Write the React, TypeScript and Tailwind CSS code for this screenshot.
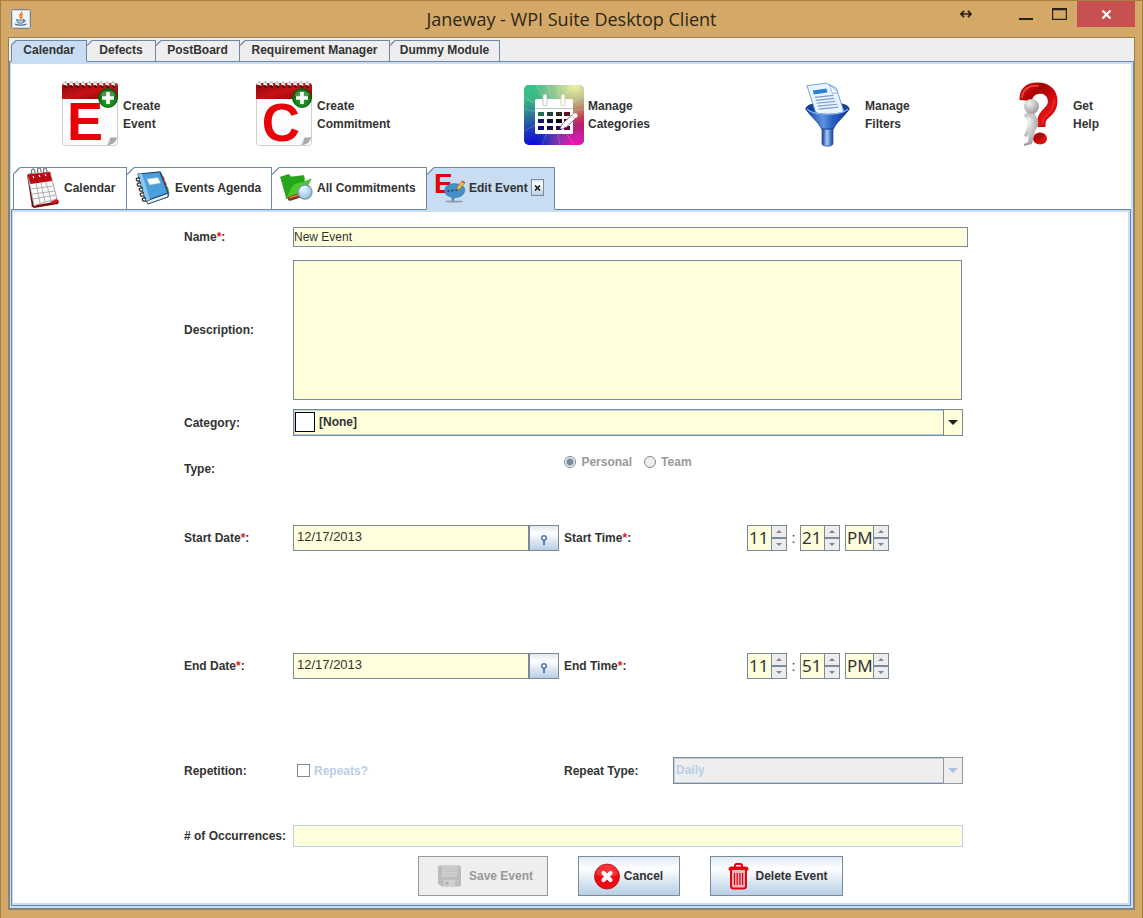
import React, { useState } from 'react';

/* ---------- Icons ---------- */

function JavaIcon() {
  return (
    <svg width="20" height="20" viewBox="0 0 20 20" aria-hidden="true">
      <rect x="0.5" y="0.5" width="19" height="19" rx="2" fill="#f3f5f7" stroke="#76828f" />
      <rect x="1.5" y="1.5" width="17" height="17" rx="1" fill="none" stroke="#cfd6dd" />
      <path d="M10.5 2.5c1.5 1.8-3 2.8-1.600 5.200.5.900 1.200 1.200.8 2.100M12 5c-1.600 1-2.200 1.700-1.300 2.900.5.700.2 1.300-.3 1.700" fill="none" stroke="#e8731c" strokeWidth="1.200" />
      <path d="M5.500 10.500c2 .8 5.500.8 7.500 0l-.8 3.200c-1.500.7-4.200.7-5.700 0zM13 11c2-.3 1.800 2-.5 2" fill="#b9c9da" stroke="#4b6f95" strokeWidth="0.900" />
      <path d="M4 15c2.500 1.600 8.500 1.600 11.500 0" fill="none" stroke="#4b6f95" strokeWidth="1.200" />
    </svg>
  );
}

function CreateIcon({ letter }: { letter: string }) {
  const rings = [4, 10, 16, 22, 28, 34, 40, 46, 52];
  return (
    <svg className="overflow-visible" width="56" height="65" viewBox="0 0 56 65" aria-hidden="true">
      <defs>
        <linearGradient id={`band${letter}`} x1="0" y1="0" x2="1" y2="1">
          <stop offset="0" stopColor="#8e0508" />
          <stop offset="0.5" stopColor="#c51216" />
          <stop offset="1" stopColor="#8b0508" />
        </linearGradient>
        <linearGradient id={`paper${letter}`} x1="0" y1="0" x2="0" y2="1">
          <stop offset="0" stopColor="#e9e9e9" />
          <stop offset="0.25" stopColor="#ffffff" />
          <stop offset="1" stopColor="#fbfbfb" />
        </linearGradient>
        <radialGradient id={`plus${letter}`} cx="0.5" cy="0.7" r="0.6">
          <stop offset="0" stopColor="#25a52b" />
          <stop offset="1" stopColor="#08620d" />
        </radialGradient>
      </defs>
      <rect x="0.5" y="4" width="55" height="59.500" rx="3" fill={`url(#paper${letter})`} stroke="#cfcfcf" />
      <path d="M0 17V4a3 3 0 0 1 3-3h50a3 3 0 0 1 3 3v13z" fill={`url(#band${letter})`} />
      {rings.map((x) => (
        <g key={x}>
          <path d={`M${x - 2.6} 0h3v3h-3z`} fill="#ffffff" />
          <circle cx={x} cy="4.600" r="1.500" fill="#4b0405" />
          <path d={`M${x - 2} 1.500c0-3 3.500-2 2.400 2.600`} fill="none" stroke="#cdc4c4" strokeWidth="1.500" />
        </g>
      ))}
      <text x={letter === 'E' ? 23 : 25} y={letter === 'E' ? 58 : 59} textAnchor="middle" fontFamily="Liberation Sans, Arial, sans-serif" fontWeight="bold" fontSize={letter === 'E' ? 54 : 53} fill="#e60207">{letter}</text>
      <path d="M55 55c-2 1-5 0-7 1 0 3-1 5-3 7 5 0 9-2 10-8z" fill="#aaaaaa" />
      <path d="M48 56c0 3-1 5-3 7 1-3 1-5 3-7z" fill="#dddddd" />
      <circle cx="46" cy="16" r="9.500" fill={`url(#plus${letter})`} stroke="#0a5a0e" strokeWidth="0.800" />
      <path d="M38.500 13a8 7 0 0 1 15 0c-4 3-11 3-15 0z" fill="#ffffff" opacity="0.250" />
      <path d="M44.200 10h3.600v4.200H52v3.600h-4.200V22h-3.600v-4.200H40v-3.600h4.200z" fill="#ffffff" />
    </svg>
  );
}

function CategoriesIcon() {
  return (
    <svg width="60" height="60" viewBox="0 0 60 60" aria-hidden="true">
      <defs>
        <clipPath id="catClip"><rect width="60" height="60" rx="5" /></clipPath>
        <radialGradient id="catGreen" cx="0" cy="0" r="0.900"><stop offset="0" stopColor="#35c78a" /><stop offset="1" stopColor="#35c78a" stopOpacity="0" /></radialGradient>
        <radialGradient id="catYellow" cx="0.850" cy="0" r="0.700"><stop offset="0" stopColor="#f0f2a0" /><stop offset="1" stopColor="#f0f2a0" stopOpacity="0" /></radialGradient>
        <radialGradient id="catRed" cx="1" cy="0.550" r="0.550"><stop offset="0" stopColor="#c40a22" /><stop offset="1" stopColor="#a00a30" stopOpacity="0" /></radialGradient>
        <radialGradient id="catPink" cx="0.850" cy="1" r="0.550"><stop offset="0" stopColor="#ff0ab8" /><stop offset="1" stopColor="#d000c0" stopOpacity="0" /></radialGradient>
        <radialGradient id="catBlue" cx="0.150" cy="1" r="0.750"><stop offset="0" stopColor="#0a05e6" /><stop offset="1" stopColor="#0a20b0" stopOpacity="0" /></radialGradient>
      </defs>
      <g clipPath="url(#catClip)">
        <rect width="60" height="60" fill="#4a8f80" />
        <rect width="60" height="60" fill="url(#catGreen)" />
        <rect width="60" height="60" fill="url(#catRed)" />
        <rect width="60" height="60" fill="url(#catYellow)" />
        <rect width="60" height="60" fill="url(#catBlue)" />
        <rect width="60" height="60" fill="url(#catPink)" />
        <path d="M30 30L12 0M30 30L24 0M30 30L36 0M30 30L48 0M30 30L60 10M30 30L0 12M30 30L0 24M30 30L60 24M30 30L18 60M30 30L36 60M30 30L50 60M30 30L0 46" stroke="#ffffff" strokeWidth="1" opacity="0.180" />
      </g>
      <rect x="11" y="14" width="38" height="35" rx="1.500" fill="#ffffff" />
      <path d="M11 23.500h38" stroke="#b8c8c0" />
      <rect x="19" y="9" width="4" height="12" rx="2" fill="#ffffff" stroke="#9fc3ab" strokeWidth="0.800" />
      <rect x="37" y="9" width="4" height="12" rx="2" fill="#ffffff" stroke="#c8c8a0" strokeWidth="0.800" />
      {[[14, 27, '#256a55'], [23, 27, '#1f3f38'], [32, 27, '#2f2a22'], [40, 27, '#5e1418'], [14, 34, '#0e1a66'], [23, 34, '#0b0f33'], [32, 34, '#0a0505'], [40, 34, '#4a0718'], [14, 41, '#0b0882'], [23, 41, '#120560'], [32, 41, '#2a0550'], [40, 41, '#620545']].map(([x, y, c]) => (
        <rect key={`${x}-${y}`} x={x} y={y} width="6" height="4" fill={c as string} />
      ))}
      <path d="M36 43l2.500-4.500 10-9 3.500 3.500-9.500 9-5.500 2.500z" fill="#ffffff" stroke="#6b4a62" strokeWidth="0.800" />
      <circle cx="51" cy="30.500" r="2.600" fill="#ffffff" stroke="#c59aa5" strokeWidth="0.500" />
    </svg>
  );
}

function FilterIcon() {
  return (
    <svg width="45" height="66" viewBox="0 0 46 66" aria-hidden="true">
      <defs>
        <linearGradient id="funnel" x1="0" y1="0" x2="1" y2="0"><stop offset="0" stopColor="#1747a8" /><stop offset="0.400" stopColor="#5c93e0" /><stop offset="0.600" stopColor="#2a62c4" /><stop offset="1" stopColor="#0f3590" /></linearGradient>
        <linearGradient id="stem" x1="0" y1="0" x2="1" y2="0"><stop offset="0" stopColor="#123a94" /><stop offset="0.450" stopColor="#a8ccf5" /><stop offset="1" stopColor="#12419c" /></linearGradient>
      </defs>
      <ellipse cx="23" cy="26.500" rx="22" ry="6.500" fill="#12409c" stroke="#0e327e" />
      <path d="M2 3L22 0.500l10 5 8 25c-7 3-22 3-29 0z" fill="#eaf4ff" stroke="#6ea3e2" />
      <path d="M25 2l3 9 6-1z" fill="#ffffff" stroke="#6ea3e2" strokeWidth="0.800" />
      <path d="M8 8l14-2 1 4-14 2z" fill="#2d80d8" />
      <path d="M10 15l19-2M11 18l19-2M12 21l19-2M13 24l20-2M14 27l20-2" stroke="#7c9ccc" strokeWidth="1.200" />
      <path d="M1 27c4 7 13 13 16 20.500h12C32 40 41 34 45 27 36 34 10 34 1 27z" fill="url(#funnel)" stroke="#123c93" strokeWidth="0.800" />
      <path d="M2 27c8 7 34 7 42 0" fill="none" stroke="#9cc4f5" strokeWidth="1.200" />
      <path d="M17.500 47.500h11V63c-2 2.500-9 2.500-11 0z" fill="url(#stem)" stroke="#123c93" strokeWidth="0.800" />
    </svg>
  );
}

function HelpIcon() {
  return (
    <svg width="39" height="65" viewBox="0 0 39 65" aria-hidden="true">
      <defs>
        <linearGradient id="helpRed" x1="0" y1="0" x2="1" y2="1"><stop offset="0" stopColor="#d81515" /><stop offset="0.350" stopColor="#a80000" /><stop offset="0.700" stopColor="#e01212" /><stop offset="1" stopColor="#980000" /></linearGradient>
        <radialGradient id="helpGrey" cx="0.350" cy="0.300" r="0.800"><stop offset="0" stopColor="#f2f2f2" /><stop offset="1" stopColor="#929292" /></radialGradient>
      </defs>
      <path d="M0.500 18C0 6 8 0.500 18 0.500 31 0.500 38.500 8 38.500 19c0 8-4 13-9 17-3 2.500-3 4-3 9h-8c-1-9 1-13 6-18 4-4 5-6 4-10-1-4-5-6-9-5-4 .8-6 3-6.500 7z" fill="url(#helpRed)" />
      <path d="M3 15c1-8 8-12 16-11" fill="none" stroke="#f25a50" strokeWidth="2" strokeLinecap="round" opacity="0.700" />
      <path d="M35 17c1 6-2 11-6 15-4 3-6 6-5.500 11" fill="none" stroke="#f0342c" strokeWidth="2" opacity="0.600" />
      <ellipse cx="21" cy="56.500" rx="7" ry="6" fill="url(#helpRed)" />
      <path d="M9 29l6 2 4 7c1 5-1 8-3 11l-3 13-8 2v-2l4-2 1-8-2 3-3-1 3-8 1-7-4-6z" fill="url(#helpGrey)" />
      <path d="M7 34l2-2 6 4" fill="none" stroke="#c9c9c9" strokeWidth="3" strokeLinecap="round" />
      <circle cx="12.500" cy="24.500" r="7.500" fill="url(#helpGrey)" />
    </svg>
  );
}

function CalendarTabIcon() {
  return (
    <svg width="34" height="40" viewBox="0 0 34 40" aria-hidden="true">
      <path d="M1 7l4-2 3 33-2 1z" fill="#5c0c0e" />
      <path d="M5 38L33 33l-1 3-24 4z" fill="#7d0d10" />
      <path d="M1.500 6.500L24 4l7 27c-6 2-16 3-23 7z" fill="#fbfbfb" stroke="#9c8b8b" strokeWidth="0.800" />
      <path d="M1.500 6.500L24 4l2 9-21.500 3z" fill="#b80d13" />
      <path d="M24 34l7-3 2 2-6 3z" fill="#c61a1e" />
      <path d="M5 21l22-3M6 26l23-3M7 31l23-4M10 15l4 20M15 15l4 19M20 14l5 18" stroke="#a9a9a9" strokeWidth="0.900" />
      <path d="M6 6c-2-6 3-7 3-1M12 5c-2-6 3-7 3-1M18 5c-2-6 3-7 3-1" fill="none" stroke="#6f6f6f" strokeWidth="1.200" />
      <path d="M7 8l1 2M13 7l1 2M19 6l1 2" stroke="#ffffff" strokeWidth="1.200" />
    </svg>
  );
}

function AgendaIcon() {
  return (
    <svg width="36" height="34" viewBox="0 0 36 34" aria-hidden="true">
      <path d="M26 2l8 20-1 4-4 1z" fill="#e8c35a" stroke="#4f5c55" strokeWidth="0.800" />
      <path d="M27 5l2 4M29 10l2 4" stroke="#cc3232" strokeWidth="2" />
      <path d="M31 15l2 4" stroke="#3d9a3d" strokeWidth="2" />
      <path d="M11 29L33 22v4l-20 7z" fill="#e5eef5" stroke="#1e4668" />
      <path d="M3 3L25 1l8 21-22 8z" fill="#4a9fdc" stroke="#1e4668" strokeWidth="1.200" />
      <path d="M3 3l4-.4L15 28.500l-4 1.500z" fill="#8ac8ef" />
      <path d="M12 8l11-1.500 2.500 5.500-11 2z" fill="#ffffff" stroke="#9bbcd4" strokeWidth="0.600" />
      <path d="M5 7c-5-1-5 4 0 3M6 12c-5-1-5 4 0 3M8 17c-5-1-5 4 0 3M9 22c-5-1-5 4 0 3M11 27c-5-1-5 4 0 3" fill="none" stroke="#2d2d2d" strokeWidth="1.300" />
    </svg>
  );
}

function CommitmentsIcon() {
  return (
    <svg width="33" height="28" viewBox="0 0 33 28" aria-hidden="true">
      <defs>
        <radialGradient id="lens" cx="0.400" cy="0.350" r="0.700"><stop offset="0" stopColor="#e4f4ff" /><stop offset="1" stopColor="#8ebfe2" /></radialGradient>
      </defs>
      <path d="M0.500 3l8-2.500 3 2.500 12-1.500 1 3-1 6-17 13.500z" fill="#27a51a" stroke="#218a17" strokeWidth="0.600" />
      <path d="M6 24.500c3-5 4-12 9-15 5-2 10-1 16-4.500-4 7-5 13-9 17-4 3-10 1-16 2.500z" fill="#48cc2c" stroke="#269a18" strokeWidth="0.700" />
      <path d="M10 24.500l9-3" stroke="#7a3c18" strokeWidth="4.500" strokeLinecap="round" />
      <path d="M10 23.500l8-2.500" stroke="#d9854a" strokeWidth="1.500" strokeLinecap="round" />
      <circle cx="25" cy="18" r="7" fill="url(#lens)" stroke="#8397a8" strokeWidth="1.300" />
      <path d="M21 16c1-3 3-4 6-3" fill="none" stroke="#ffffff" strokeWidth="1.200" />
    </svg>
  );
}

function EditEventIcon() {
  return (
    <svg className="overflow-visible" width="31" height="31" viewBox="0 0 31 31" aria-hidden="true">
      <text x="-1" y="21" fontFamily="Liberation Sans, Arial, sans-serif" fontWeight="bold" fontSize="28" fill="#e00409">E</text>
      <ellipse cx="19" cy="29.500" rx="9" ry="1" fill="#8b98a8" />
      <path d="M10 17c1-5 8-6 13-5 6 1 8 5 6 9-2 4-7 4.500-9 4.500L17.500 29l-1-4c-5-1-8-4-6.500-8z" fill="#438fc6" stroke="#2c70a2" strokeWidth="0.600" />
      <circle cx="13.500" cy="19" r="1.100" fill="#1d3c58" />
      <circle cx="17.500" cy="18.500" r="1.100" fill="#1d3c58" />
      <circle cx="21.500" cy="18" r="1.100" fill="#1d3c58" />
      <path d="M21.500 18l1-3.500 4-5 3 2-4.500 5.500z" fill="#f2b84b" stroke="#8a6428" strokeWidth="0.500" />
      <path d="M26.500 9.500l1-1 3 2-1 1z" fill="#d9413c" />
    </svg>
  );
}

function SaveIcon() {
  return (
    <svg width="23" height="24" viewBox="0 0 24 24" aria-hidden="true">
      <path d="M2 1h20a2 2 0 0 1 2 2v18a2 2 0 0 1-2 2H4l-4-3V3a2 2 0 0 1 2-2z" fill="#bcbcbc" />
      <rect x="4" y="1" width="16" height="12" fill="#cdcdcd" />
      <path d="M5 4h14M5 7h14M5 10h14" stroke="#c0c0c0" />
      <rect x="6" y="16" width="12" height="7" fill="#d0d0d0" />
      <rect x="8" y="18" width="3" height="3" fill="#acacac" />
    </svg>
  );
}

function CancelIcon() {
  return (
    <svg width="26" height="27" viewBox="0 0 26 27" aria-hidden="true">
      <ellipse cx="13" cy="13.500" rx="12.500" ry="12.500" fill="#ee0a10" stroke="#b01318" strokeWidth="0.800" />
      <path d="M2 11C3 4 8 1.500 13 1.500S23 4 24 11c-6 4-16 4-22 0z" fill="#ff8080" opacity="0.350" />
      <path d="M9.500 10l7 7M16.500 10l-7 7" stroke="#ffffff" strokeWidth="4.200" strokeLinecap="round" />
    </svg>
  );
}

function TrashIcon() {
  return (
    <svg width="21" height="27" viewBox="0 0 21 27" aria-hidden="true">
      <path d="M7 4V2.500A1.500 1.500 0 0 1 8.500 1h4A1.500 1.500 0 0 1 14 2.500V4" fill="none" stroke="#e30410" strokeWidth="2" />
      <path d="M1 7V6a2 2 0 0 1 2-2h15a2 2 0 0 1 2 2v1z" fill="#e30410" stroke="#e30410" />
      <path d="M3 7v16a2.500 2.500 0 0 0 2.500 2.500h10A2.500 2.500 0 0 0 18 23V7" fill="#f3b9c2" stroke="#e30410" strokeWidth="2" />
      <path d="M6.500 10v12M9.200 10v12M11.900 10v12M14.500 10v12" stroke="#e30410" strokeWidth="1.300" />
    </svg>
  );
}

/* ---------- Shared pieces ---------- */

function Chamfer({ outside, size, first }: { outside: string; size: number; first?: boolean }) {
  return (
    <svg className={first ? 'absolute -left-px -top-px' : 'absolute left-0 -top-px'} width={size} height={size} viewBox={`0 0 ${size} ${size}`} aria-hidden="true">
      <path d={`M0 0H${size}L0 ${size}z`} fill={outside} />
      <path d={`M0 ${size - 0.5}L${size - 0.5} 0`} stroke="#6f87a6" strokeWidth="1.200" />
    </svg>
  );
}

function Triangle({ up, fill }: { up?: boolean; fill: string }) {
  return (
    <svg width="6" height="3" viewBox="0 0 6 3" aria-hidden="true">
      <path d={up ? 'M0 3h6L3 0z' : 'M0 0h6L3 3z'} fill={fill} />
    </svg>
  );
}

function FieldLabel({ htmlFor, text, required }: { htmlFor: string; text: string; required?: boolean }) {
  return (
    <label htmlFor={htmlFor} className="font-bold">
      {text}
      {required && <span className="text-[#e01b1b]">*</span>}:
    </label>
  );
}

const fieldRow = 'grid grid-cols-[109px_minmax(0,1fr)] items-center';
const bevel = 'border border-[#7a8a99] bg-linear-to-b from-[#dfe9f3] via-[#ffffff] via-30% to-[#b8cfe5]';

function DateField({ id, name }: { id: string; name: string }) {
  return (
    <div className="flex h-[26px]">
      <input id={id} defaultValue="12/17/2013" className="min-w-0 flex-1 border border-[#7a8a99] bg-[#ffffdc] px-[3px] pb-[2px] text-[13px] outline-none" />
      <button type="button" aria-label={`Pick ${name}`} className={`flex w-[30px] items-center justify-center ${bevel}`}>
        <svg className="mt-1" width="8" height="10" viewBox="0 0 8 10" aria-hidden="true">
          <circle cx="4" cy="3" r="2.200" fill="none" stroke="#5b7bb0" strokeWidth="1.600" />
          <path d="M4 5v5" stroke="#5b7bb0" strokeWidth="2" />
        </svg>
      </button>
    </div>
  );
}

function Spinner({ id, value, label, wide }: { id?: string; value: string; label: string; wide?: boolean }) {
  const step = 'flex flex-1 items-center justify-center border border-[#7a8a99] bg-[#ededed]';
  return (
    <div className={wide ? 'flex h-[26px] w-11' : 'flex h-[26px] w-10'}>
      <input id={id} aria-label={id ? undefined : label} defaultValue={value} className="w-0 min-w-0 flex-1 border border-r-0 border-[#7a8a99] bg-[#ffffdc] pl-px font-['Noto_Sans',sans-serif] text-[17px] leading-6 outline-none" />
      <div className="flex w-4 flex-col">
        <button type="button" aria-label={`${label} up`} className={step}><Triangle up fill="#7d8791" /></button>
        <button type="button" aria-label={`${label} down`} className={step}><Triangle fill="#7d8791" /></button>
      </div>
    </div>
  );
}

function TimeField({ id, name, minutes }: { id: string; name: string; minutes: string }) {
  return (
    <div className="flex items-center justify-center">
      <Spinner id={id} value="11" label={`${name} hour`} />
      <span className="w-[13px] text-center text-sm">:</span>
      <Spinner value={minutes} label={`${name} minute`} />
      <span className="w-[5px]" />
      <Spinner value="PM" label={`${name} period`} wide />
    </div>
  );
}

function DateTimeRow({ prefix, minutes }: { prefix: string; minutes: string }) {
  const key = prefix.toLowerCase();
  return (
    <div className="grid grid-cols-[109px_minmax(0,1fr)_114px_290px] items-center">
      <FieldLabel htmlFor={`${key}-date`} text={`${prefix} Date`} required />
      <DateField id={`${key}-date`} name={`${key} date`} />
      <div className="pl-[5px]"><FieldLabel htmlFor={`${key}-time`} text={`${prefix} Time`} required /></div>
      <TimeField id={`${key}-time`} name={`${prefix} time`} minutes={minutes} />
    </div>
  );
}

function ToolButton({ icon, lines, gap }: { icon: React.ReactNode; lines: [string, string]; gap: string }) {
  return (
    <button type="button" className={`flex items-center justify-self-start text-left font-bold leading-[18px] ${gap}`}>
      {icon}
      <span>{lines[0]}<br />{lines[1]}</span>
    </button>
  );
}

/* ---------- Page ---------- */

const modules = [
  { name: 'Calendar', width: 'w-[76px]' },
  { name: 'Defects', width: 'w-[70px]' },
  { name: 'PostBoard', width: 'w-[85px]' },
  { name: 'Requirement Manager', width: 'w-[151px]' },
  { name: 'Dummy Module', width: 'w-[111px]' },
];

const viewTab = 'relative -mr-px flex h-[43px] items-center border border-[#6f87a6] bg-white pb-[2px] font-bold';

export default function App() {
  const [module, setModule] = useState('Calendar');
  return (
    <div className="flex min-h-screen flex-col border border-[#a8803f] bg-[#d4a967] px-[7px] pb-2 font-['Liberation_Sans',Arial,sans-serif] text-xs leading-4 text-[#333333]">
      <header className="grid h-9 grid-cols-[1fr_auto_1fr] items-center">
        <div className="pl-[3px]"><JavaIcon /></div>
        <h1 className="font-['Open_Sans',sans-serif] text-lg text-[#2f2617]">Janeway - WPI Suite Desktop Client</h1>
        <div className="flex items-start justify-end self-start">
          <svg className="mt-[9px]" width="12" height="8" viewBox="0 0 12 8" aria-hidden="true">
            <path d="M2 4h8M4 0.800L1 4l3 3.200M8 0.800L11 4 8 7.200" fill="none" stroke="#2b2013" strokeWidth="1.700" />
          </svg>
          <button type="button" aria-label="Minimize" className="ml-9 flex h-[26px] w-9 items-center justify-center">
            <svg width="14" height="14" viewBox="0 0 14 14" aria-hidden="true"><path d="M0 12h14" stroke="#2b2013" strokeWidth="2" /></svg>
          </button>
          <button type="button" aria-label="Maximize" className="flex h-[26px] w-[30px] items-center justify-center">
            <svg width="15" height="12" viewBox="0 0 15 12" aria-hidden="true"><path d="M0.500 0.500h14v11H0.500zM0 1.500h15" fill="none" stroke="#2b2013" strokeWidth="1.400" /></svg>
          </button>
          <button type="button" aria-label="Close" className="ml-[3px] flex h-[26px] w-[58px] items-center justify-center bg-[#c75050]">
            <svg width="11" height="9" viewBox="0 0 11 9" aria-hidden="true"><path d="M1.500 0.500l8 8M9.500 0.500l-8 8" stroke="#ffffff" strokeWidth="2.200" /></svg>
          </button>
        </div>
      </header>

      <div className="flex flex-1 flex-col border border-[#97814f] bg-[#eeeeee]">
        <nav className="relative -mb-px flex pl-[2px] pt-[2px]">
          {modules.map((m, i) => (
            <button
              key={m.name}
              type="button"
              onClick={() => setModule(m.name)}
              className={`relative -mr-px flex h-[22px] items-center justify-center border border-[#6f87a6] pb-[2px] font-bold ${m.width} ${m.name === module ? 'z-10 border-b-[#c8ddf2] bg-[#c8ddf2]' : 'bg-[#eeeeee]'}`}
            >
              <Chamfer outside="#eeeeee" size={6} first={i === 0} />
              {m.name}
            </button>
          ))}
        </nav>

        <div className="flex flex-1 flex-col border border-[#6f87a6]">
          <main className="flex flex-1 flex-col border-2 border-l border-[#c8ddf2] bg-white">
            <div className="grid h-[103px] grid-cols-[194fr_268fr_281fr_214fr_112fr] items-center pb-[2px] pl-[51px]">
              <ToolButton icon={<CreateIcon letter="E" />} lines={['Create', 'Event']} gap="gap-[5px]" />
              <ToolButton icon={<CreateIcon letter="C" />} lines={['Create', 'Commitment']} gap="gap-[5px]" />
              <ToolButton icon={<CategoriesIcon />} lines={['Manage', 'Categories']} gap="gap-1" />
              <ToolButton icon={<FilterIcon />} lines={['Manage', 'Filters']} gap="gap-[15px]" />
              <ToolButton icon={<HelpIcon />} lines={['Get', 'Help']} gap="gap-[15px]" />
            </div>

            <nav className="relative -mb-px flex pl-[2px]">
              <button type="button" className={`${viewTab} w-[114px] gap-1 pl-3`}>
                <Chamfer outside="#ffffff" size={8} first /><CalendarTabIcon />Calendar
              </button>
              <button type="button" className={`${viewTab} w-[146px] gap-1 pl-2`}>
                <Chamfer outside="#ffffff" size={8} /><AgendaIcon />Events Agenda
              </button>
              <button type="button" className={`${viewTab} w-[156px] gap-1 pl-2`}>
                <Chamfer outside="#ffffff" size={8} /><CommitmentsIcon />All Commitments
              </button>
              <div className="relative z-10 flex h-[43px] w-[129px] items-center border border-[#6f87a6] border-b-[#c8ddf2] bg-[#c8ddf2] pb-[2px] pl-2">
                <Chamfer outside="#ffffff" size={8} />
                <button type="button" className="flex items-center gap-[3px] font-bold"><EditEventIcon />Edit Event</button>
                <button type="button" aria-label="Close tab" className={`ml-[3px] flex h-[17px] w-[13px] items-center justify-center ${bevel}`}>
                  <svg width="7" height="6" viewBox="0 0 7 6" aria-hidden="true"><path d="M1 0.500l5 5M6 0.500l-5 5" stroke="#222222" strokeWidth="1.700" /></svg>
                </button>
              </div>
            </nav>

            <div className="flex flex-1 flex-col border border-[#6f87a6]">
              <form className="flex-1 border-2 border-l border-[#c8ddf2] pb-[7px] pl-[171px] pr-[165px] pt-[15px]" onSubmit={(e) => e.preventDefault()}>
                <div className={fieldRow}>
                  <FieldLabel htmlFor="name" text="Name" required />
                  <input id="name" defaultValue="New Event" className="-mr-[5px] h-5 border border-[#7a8a99] bg-[#ffffdc] outline-none" />
                </div>
                <div className={`${fieldRow} mt-[13px]`}>
                  <FieldLabel htmlFor="description" text="Description" />
                  <textarea id="description" className="mr-px block h-[140px] resize-none border border-[#7a8a99] bg-[#ffffdc] outline-none" />
                </div>
                <div className={`${fieldRow} mt-[9px]`}>
                  <FieldLabel htmlFor="category" text="Category" />
                  <div className="relative">
                    <select id="category" className="block h-[27px] w-full appearance-none rounded-none border border-[#7a8a99] bg-[#ffffdc] pb-[2px] pl-[25px] font-bold shadow-[inset_0_0_0_1px_#b8cfe5] outline-none">
                      <option>[None]</option>
                    </select>
                    <span className="pointer-events-none absolute left-[2px] top-[3px] h-5 w-5 border border-black bg-white" />
                    <span className="pointer-events-none absolute inset-y-0 right-0 flex w-5 items-center justify-center border border-[#7a8a99] bg-[#ffffdc]">
                      <svg width="10" height="5" viewBox="0 0 10 5" aria-hidden="true"><path d="M0 0h10L5 5z" fill="#222222" /></svg>
                    </span>
                  </div>
                </div>
                <fieldset disabled className={`${fieldRow} mt-4 h-[34px]`}>
                  <span className="font-bold">Type:</span>
                  <div className="flex justify-center gap-3 self-start pt-[2px] font-bold text-[#999999]">
                    <label className="flex items-center gap-[5px]">
                      <input type="radio" name="type" defaultChecked className="h-3 w-3 appearance-none rounded-full border border-[#7a8a99] bg-[#eeeeee] bg-[radial-gradient(circle,#7a8a99_3px,transparent_4px)]" />
                      Personal
                    </label>
                    <label className="flex items-center gap-[5px]">
                      <input type="radio" name="type" className="h-3 w-3 appearance-none rounded-full border border-[#8b8b8b] bg-[#eeeeee]" />
                      Team
                    </label>
                  </div>
                </fieldset>
                <div className="mt-[39px]"><DateTimeRow prefix="Start" minutes="21" /></div>
                <div className="mt-[102px]"><DateTimeRow prefix="End" minutes="51" /></div>
                <div className="mt-[78px] grid grid-cols-[109px_minmax(0,1fr)_109px_290px] items-center">
                  <span className="font-bold">Repetition:</span>
                  <label className="flex items-center gap-1 pl-1 font-bold text-[#b8cfe5]">
                    <input type="checkbox" className="h-[13px] w-[13px] appearance-none border border-[#7a8a99] bg-white" />
                    Repeats?
                  </label>
                  <FieldLabel htmlFor="repeat-type" text="Repeat Type" />
                  <div className="relative">
                    <select id="repeat-type" disabled className="block h-[27px] w-full appearance-none rounded-none border border-[#7a8a99] bg-[#eeeeee] pb-[2px] pl-[2px] font-bold text-[#b8cfe5] opacity-100 shadow-[inset_0_0_0_1px_#b8cfe5]">
                      <option>Daily</option>
                    </select>
                    <span className="pointer-events-none absolute inset-y-0 right-0 flex w-5 items-center justify-center border border-[#8c9aa6] bg-[#eeeeee]">
                      <svg width="10" height="5" viewBox="0 0 10 5" aria-hidden="true"><path d="M0 0h10L5 5z" fill="#a9c4de" /></svg>
                    </span>
                  </div>
                </div>
                <div className={`${fieldRow} mt-[41px]`}>
                  <FieldLabel htmlFor="occurrences" text="# of Occurrences" />
                  <input id="occurrences" className="h-[22px] border border-[#b8cfe5] bg-[#ffffdc] outline-none" />
                </div>
                <div className={`${fieldRow} mt-[9px]`}>
                  <div className="col-start-2 flex h-10 justify-center gap-[30px] pl-1 font-bold">
                    <button type="button" disabled className="flex w-[130px] items-center justify-center gap-2 border border-[#999999] bg-[#eeeeee] pl-1.5 text-[#999999]"><SaveIcon />Save Event</button>
                    <button type="button" className={`flex w-[102px] items-center justify-center gap-1 ${bevel}`}><CancelIcon />Cancel</button>
                    <button type="button" className={`flex w-[133px] items-center justify-center gap-1.5 pl-1 ${bevel}`}><TrashIcon />Delete Event</button>
                  </div>
                </div>
              </form>
            </div>
          </main>
        </div>
      </div>
    </div>
  );
}
